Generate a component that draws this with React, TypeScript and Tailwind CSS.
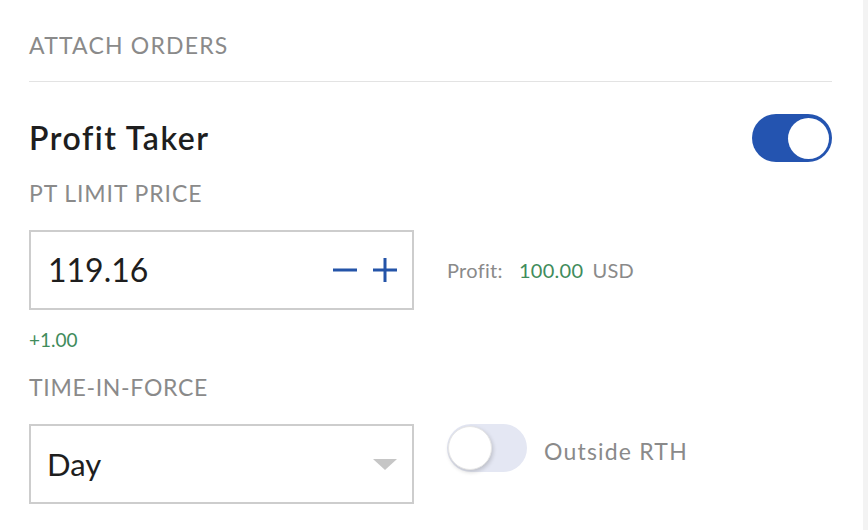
import React from 'react';

const Toggle = ({ on }: { on: boolean }) =>
  on ? (
    <div className="flex h-[48px] w-[80px] items-center justify-end rounded-full bg-[#2454b0] pr-[3px]">
      <div className="h-[41px] w-[41px] rounded-full bg-white" />
    </div>
  ) : (
    <div className="flex h-[48px] w-[80px] items-center rounded-full bg-[#e4e7f3] pl-[1px]">
      <div className="h-[44px] w-[44px] rounded-full border border-[#e6e6e6] bg-white shadow-[1px_2px_4px_rgba(0,0,0,0.18)]" />
    </div>
  );

const App = () => {
  return (
    <div
      className="flex h-[530px] w-[868px] bg-white"
      style={{ fontFamily: 'Lato, "Open Sans", sans-serif' }}
    >
      <div className="flex-1 pl-[29px] pr-[31px]">
        <div className="pt-[33px] text-[23px] leading-[24px] tracking-[1.2px] text-[#8a8a8a]">ATTACH ORDERS</div>
        <div className="mt-[24px] h-px bg-[#e3e3e3]" />

        <div className="mt-[32px] flex h-[48px] items-center justify-between">
          <div className="text-[32px] leading-[40px] font-semibold tracking-[1.5px] text-[#1e1e1e]">Profit Taker</div>
          <Toggle on />
        </div>

        <div className="mt-[19px] text-[23px] leading-[24px] tracking-[0.9px] text-[#8a8a8a]">PT LIMIT PRICE</div>

        <div className="mt-[25px] flex items-center gap-[33px]">
          <div className="flex h-[80px] w-[385px] items-center justify-between border-2 border-[#cdcdcd] pl-[17px] pr-[15px]">
            <span className="text-[32px] text-[#1e1e1e]">119.16</span>
            <div className="flex items-center gap-[16px]">
              <svg width="24" height="24" viewBox="0 0 24 24">
                <rect x="0" y="10.5" width="24" height="3" fill="#2454a8" />
              </svg>
              <svg width="24" height="24" viewBox="0 0 24 24">
                <rect x="0" y="10.5" width="24" height="3" fill="#2454a8" />
                <rect x="10.5" y="0" width="3" height="24" fill="#2454a8" />
              </svg>
            </div>
          </div>
          <div className="flex items-baseline text-[20px] tracking-[0.3px] text-[#8a8a8a]">
            <span>Profit:</span>
            <span className="ml-[16px] text-[#3f8c5c]">100.00</span>
            <span className="ml-[9px]">USD</span>
          </div>
        </div>

        <div className="mt-[18px] text-[19px] leading-[24px] text-[#3f8c5c]">+1.00</div>

        <div className="mt-[23px] text-[23px] leading-[24px] tracking-[0.7px] text-[#8a8a8a]">TIME-IN-FORCE</div>

        <div className="mt-[25px] flex items-start gap-[33px]">
          <div className="flex h-[80px] w-[385px] items-center justify-between border-2 border-[#cdcdcd] pl-[16px] pr-[15px]">
            <span className="text-[31px] text-[#1e1e1e]">Day</span>
            <svg width="24" height="11" viewBox="0 0 24 11">
              <path d="M0 0 L24 0 L12 11 Z" fill="#c6c6c6" />
            </svg>
          </div>
          <div className="flex h-[48px] items-center gap-[17px]">
            <Toggle on={false} />
            <span className="mt-[6px] text-[23px] tracking-[1.2px] text-[#8a8a8a]">Outside RTH</span>
          </div>
        </div>
      </div>
      <div className="h-full w-[5px] bg-[#f3f3f3]" />
    </div>
  );
};

export default App;
